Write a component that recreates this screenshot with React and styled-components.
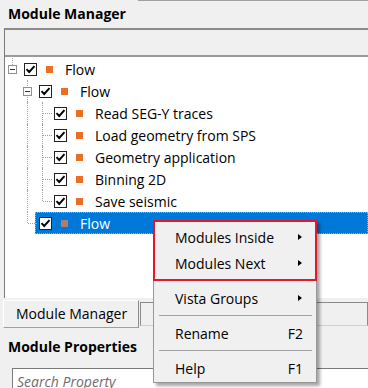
import React from 'react'
import styled, { createGlobalStyle } from 'styled-components'

const GlobalStyle = createGlobalStyle`
  html, body {
    margin: 0;
    padding: 0;
    background: #f0f0f0;
    overflow: hidden;
  }
  body {
    font-family: "Open Sans", "Noto Sans", sans-serif;
    color: #000;
  }
`

const Screen = styled.div`
  position: relative;
  width: 368px;
  height: 388px;
  display: flex;
  flex-direction: column;
  overflow: hidden;

  & > * {
    flex-shrink: 0;
  }
`

const TitleRow = styled.div`
  display: flex;
  height: 28px;
  padding-left: 8px;
`

const Title = styled.div`
  font-weight: 700;
  font-size: 14px;
  line-height: 28px;
  white-space: nowrap;
`

const TitleRule = styled.div`
  flex: 1;
  margin-left: 12px;
  border-top: 1px solid #a0a0a0;
`

const Panel = styled.div`
  margin-left: 4px;
  height: 268px;
  display: flex;
  flex-direction: column;
  border-top: 2px solid #8a8a8a;
  border-left: 1px solid #7a7a7a;
`

const HeaderBand = styled.div`
  height: 25px;
  background: #f0f0f0;
  border-bottom: 2px solid #9a9a9a;
`

const TreeArea = styled.div`
  flex: 1;
  background: #fff;
  padding-top: 1px;
`

const Row = styled.div`
  display: flex;
  align-items: center;
  height: 22px;
`

const Cell = styled.div`
  position: relative;
  flex: none;
  width: 15px;
  height: 100%;
  display: flex;
  align-items: center;
  justify-content: center;

  &::before {
    content: '';
    display: ${p => (p.$v === 'none' ? 'none' : 'block')};
    position: absolute;
    left: 7px;
    top: 0;
    height: ${p => (p.$v === 'full' ? '100%' : '50%')};
    border-left: 1px dotted #a0a0a0;
  }

  &::after {
    content: '';
    display: ${p => (p.$h ? 'block' : 'none')};
    position: absolute;
    left: 8px;
    right: -2px;
    top: 50%;
    border-top: 1px dotted #a0a0a0;
  }
`

const Expander = styled.div`
  position: relative;
  z-index: 1;
  width: 9px;
  height: 9px;
  box-sizing: border-box;
  border: 1px solid #919191;
  background: #fff;
  display: flex;
  align-items: center;
  justify-content: center;

  &::before {
    content: '';
    width: 5px;
    height: 1px;
    background: #333;
  }
`

const Content = styled.div`
  flex: 1;
  height: 100%;
  box-sizing: border-box;
  display: flex;
  align-items: center;
  padding-left: 3px;
  border: 1px dotted ${p => (p.$selected ? '#e9a23b' : 'transparent')};
  background: ${p => (p.$selected ? '#0078d7' : 'transparent')};
`

const Check = styled.div`
  flex: none;
  width: 13px;
  height: 13px;
  box-sizing: border-box;
  border: 1px solid #222;
  background: #fff;
  display: flex;
  align-items: center;
  justify-content: center;
  margin-right: 9px;
`

const Square = styled.div`
  flex: none;
  width: 7px;
  height: 7px;
  background: ${p => (p.$selected ? '#b57a68' : '#ea6f22')};
  margin-right: 12px;
`

const Label = styled.span`
  font-size: 14px;
  white-space: nowrap;
  color: ${p => (p.$selected ? '#fff' : '#000')};
`

const TabStrip = styled.div`
  display: flex;
  height: 30px;
  padding-top: 2px;
  box-sizing: border-box;
`

const Tab = styled.div`
  box-sizing: border-box;
  height: ${p => (p.$active ? '28px' : '24px')};
  margin-top: ${p => (p.$active ? '0' : '2px')};
  padding: 0 11px 0 12px;
  font-size: 14px;
  line-height: 26px;
  white-space: nowrap;
  background: #f0f0f0;
  border-top: 1px solid ${p => (p.$active ? '#ffffff' : '#8a8a8a')};
  border-left: 1px solid ${p => (p.$active ? '#ffffff' : '#8a8a8a')};
  border-right: 1px solid #8a8a8a;
  border-bottom: 1px solid ${p => (p.$active ? '#a0a0a0' : '#d0d0d0')};
  margin-left: ${p => (p.$active ? '3px' : '1px')};
  flex: ${p => (p.$active ? 'none' : '1')};
`

const TabMark = styled.span`
  display: inline-block;
  width: 2px;
  height: 3px;
  margin-left: 1px;
  vertical-align: 8px;
  background: #e0a050;
`

const SectionTitle = styled.div`
  font-weight: 700;
  font-size: 14px;
  padding-left: 8px;
  margin-top: 6px;
  line-height: 26px;
`

const Search = styled.div`
  margin: 8px 0 0 12px;
  height: 30px;
  box-sizing: border-box;
  border-top: 1px solid #7a7a7a;
  border-left: 1px solid #7a7a7a;
  background: #fff;
  padding-left: 4px;
  font-size: 14px;
  font-style: italic;
  color: #6d6d6d;
  line-height: 26px;
`

const Menu = styled.div`
  position: absolute;
  left: 153px;
  top: 220px;
  width: 164px;
  box-sizing: border-box;
  background: #f0f0f0;
  border: 1px solid #979797;
  padding: 3px 0 1px;
  box-shadow: 3px 3px 3px rgba(0, 0, 0, 0.35);
  font-size: 14px;
`

const Highlight = styled.div`
  position: absolute;
  left: -1px;
  right: -1px;
  top: -1px;
  height: 61px;
  box-sizing: border-box;
  border: 2px solid #e3182d;
  pointer-events: none;
`

const Item = styled.div`
  display: flex;
  align-items: center;
  height: 26px;
  padding: 0 13px 0 21px;
`

const ItemText = styled.span`
  flex: 1;
  white-space: nowrap;
`

const Shortcut = styled.span`
  white-space: nowrap;
`

const Arrow = styled.span`
  width: 0;
  height: 0;
  margin-right: 1px;
  border-top: 3.5px solid transparent;
  border-bottom: 3.5px solid transparent;
  border-left: 4px solid #000;
`

const Separator = styled.div`
  height: 1px;
  margin: 4px 4px 4px 5px;
  background: #a0a0a0;
`

const CheckMark = () => (
  <svg width="11" height="11" viewBox="0 0 11 11">
    <path d="M1.5 5.2 L4.2 8 L9.5 2.2" fill="none" stroke="#000" strokeWidth="1.9" />
  </svg>
)

const tree = [
  { label: 'Flow', guides: [], v: 'top', expander: true },
  { label: 'Flow', guides: ['none'], v: 'full', expander: true },
  { label: 'Read SEG-Y traces', guides: ['none', 'full'], v: 'full' },
  { label: 'Load geometry from SPS', guides: ['none', 'full'], v: 'full' },
  { label: 'Geometry application', guides: ['none', 'full'], v: 'full' },
  { label: 'Binning 2D', guides: ['none', 'full'], v: 'full' },
  { label: 'Save seismic', guides: ['none', 'full'], v: 'top' },
  { label: 'Flow', guides: ['none'], v: 'top', selected: true },
]

const menuItems = [
  { text: 'Modules Inside', arrow: true },
  { text: 'Modules Next', arrow: true },
  { sep: true },
  { text: 'Vista Groups', arrow: true },
  { sep: true },
  { text: 'Rename', key: 'F2' },
  { sep: true },
  { text: 'Help', key: 'F1' },
]

const App = () => (
  <Screen>
    <GlobalStyle />
    <TitleRow>
      <Title>Module Manager</Title>
      <TitleRule />
    </TitleRow>

    <Panel>
      <HeaderBand />
      <TreeArea>
        {tree.map((node, i) => (
          <Row key={i}>
            {node.guides.map((g, j) => (
              <Cell key={j} $v={g} />
            ))}
            <Cell $v={node.v} $h={!node.expander}>
              {node.expander && <Expander />}
            </Cell>
            <Content $selected={node.selected}>
              <Check>
                <CheckMark />
              </Check>
              <Square $selected={node.selected} />
              <Label $selected={node.selected}>{node.label}</Label>
            </Content>
          </Row>
        ))}
      </TreeArea>
    </Panel>

    <TabStrip>
      <Tab $active>Module Manager</Tab>
      <Tab>
        <TabMark />
      </Tab>
    </TabStrip>

    <SectionTitle>Module Properties</SectionTitle>
    <Search>Search Property</Search>

    <Menu>
      {menuItems.map((m, i) =>
        m.sep ? (
          <Separator key={i} />
        ) : (
          <Item key={i}>
            <ItemText>{m.text}</ItemText>
            {m.arrow && <Arrow />}
            {m.key && <Shortcut>{m.key}</Shortcut>}
          </Item>
        )
      )}
      <Highlight />
    </Menu>
  </Screen>
)

export default App
